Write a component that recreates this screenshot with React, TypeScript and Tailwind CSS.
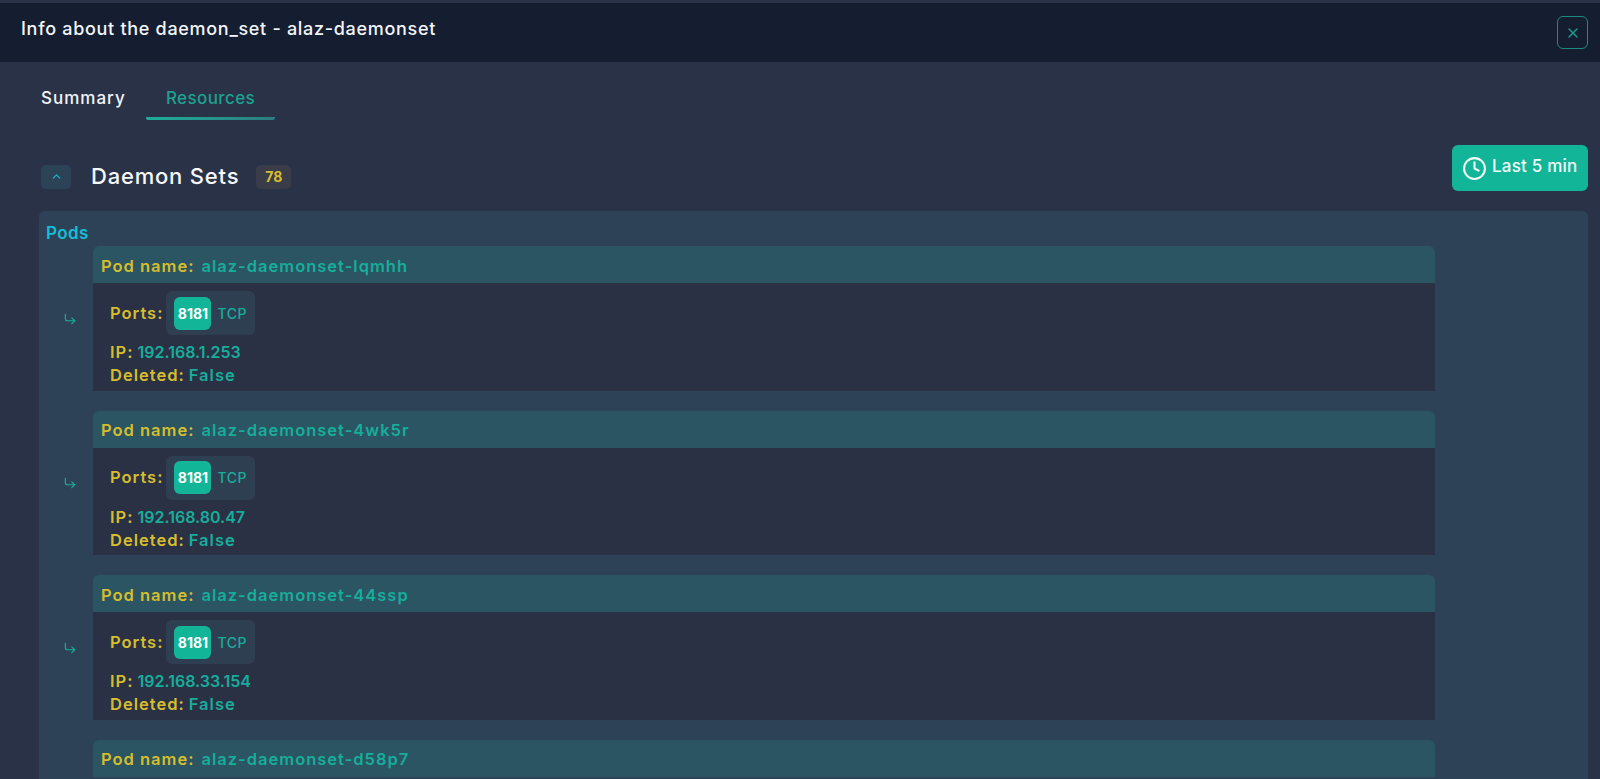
import { Clock, ChevronUp, X, CornerDownRight } from "lucide-react";

const pods = [
  { name: "alaz-daemonset-lqmhh", ip: "192.168.1.253" },
  { name: "alaz-daemonset-4wk5r", ip: "192.168.80.47" },
  { name: "alaz-daemonset-44ssp", ip: "192.168.33.154" },
  { name: "alaz-daemonset-d58p7", ip: "" },
];

function Pod({ name, ip }: { name: string; ip: string }) {
  return (
    <div className="flex items-stretch">
      <div className="w-[54px] shrink-0 flex items-center pl-[24px] pt-[1px] text-[#17ad9b]">
        {ip && <CornerDownRight size={14} strokeWidth={2} />}
      </div>
      <div className="w-[1342px] shrink-0">
        <div className="h-[37px] rounded-t-[6px] bg-[#2b5562] flex items-center pl-[8px] pt-[3px] text-[16.5px] font-semibold tracking-[1px]">
          <span className="text-[#d6bd2e]">Pod name:</span>
          <span className="ml-[7px] text-[#17ad9b]">{name}</span>
        </div>
        {ip && (
          <div className="h-[107.5px] bg-[#2a3145] pl-[17px] pt-[8px] text-[16.5px] font-semibold tracking-[1px]">
            <div className="flex items-center h-[44px]">
              <span className="text-[#d6bd2e]">Ports:</span>
              <div className="ml-[3px] h-[44px] w-[89px] rounded-[6px] bg-[#2f3f52] flex items-center pl-[8px] tracking-normal">
                <span className="w-[37px] h-[33px] rounded-[6px] bg-[#12b598] text-white text-[14px] font-bold flex items-center justify-center">8181</span>
                <span className="ml-[6px] text-[#17ad9b] text-[14px] font-medium tracking-[0.5px]">TCP</span>
              </div>
            </div>
            <div className="mt-[6px] leading-[23px] flex">
              <span className="text-[#d6bd2e]">IP:</span>
              <span className="ml-[4px] text-[#17ad9b] text-[16px] tracking-normal">{ip}</span>
            </div>
            <div className="leading-[22px] flex">
              <span className="text-[#d6bd2e]">Deleted:</span>
              <span className="ml-[4px] text-[#17ad9b]">False</span>
            </div>
          </div>
        )}
      </div>
    </div>
  );
}

export default function App() {
  return (
    <div className="h-[779px] w-[1600px] overflow-hidden bg-[#2a3248] text-white font-['Inter',sans-serif]">
      <div className="h-[3px] bg-[#2a3248]" />
      <header className="h-[59px] bg-[#151e31] flex items-start justify-between pl-[21px] pr-[12px]">
        <h1 className="mt-[14px] text-[18px] leading-[24px] font-medium tracking-[0.7px] text-[#f3f5f8]">Info about the daemon_set - alaz-daemonset</h1>
        <button className="mt-[13px] w-[31px] h-[33px] rounded-[6px] border border-[#1c8a80] flex items-center justify-center text-[#1c9c8e]">
          <X size={16} />
        </button>
      </header>
      <nav className="pl-[21px] mt-[21px] flex h-[37px] text-[17px] font-medium">
        <div className="w-[125px] pl-[20px] leading-[30px] tracking-[1px] text-[#f3f5f8]">Summary</div>
        <div className="w-[129px] flex flex-col items-center">
          <span className="leading-[30px] tracking-[0.4px] text-[#1ca18f]">Resources</span>
          <span className="mt-auto block w-full h-[3px] rounded-b-[2px] bg-gradient-to-r from-[#1cae9a] to-[#2a7d80]" />
        </div>
      </nav>
      <div className="mt-[25px] pl-[41px] pr-[12px] flex items-start justify-between h-[66px]">
        <div className="flex items-center mt-[15px]">
          <span className="w-[30px] h-[24px] rounded-[5px] bg-[#2c4257] flex items-center justify-center text-[#16b3c4]">
            <ChevronUp size={13} strokeWidth={2.5} />
          </span>
          <span className="ml-[20px] text-[22px] font-medium tracking-[0.8px] text-[#f7f8fa]">Daemon Sets</span>
          <span className="ml-[17px] w-[35px] h-[24px] rounded-[5px] bg-[#3a3d49] flex items-center justify-center text-[14px] font-bold text-[#d6bd2e]">78</span>
        </div>
        <button className="w-[136px] h-[46px] rounded-[6px] bg-[#12b598] flex items-center pl-[10px] pb-[2px] text-[17px] font-medium tracking-[0.2px] text-[#f3fbf9] whitespace-nowrap">
          <Clock size={25} strokeWidth={2} className="shrink-0 mt-[2px]" />
          <span className="ml-[5px]">Last 5 min</span>
        </button>
      </div>
      <section className="ml-[39px] w-[1549px] h-[600px] rounded-t-[6px] bg-[#2e4257] pt-[11px]">
        <div className="pl-[7px] pb-[1px] text-[17px] leading-[23px] font-semibold tracking-[0.4px] text-[#12bfd8]">Pods</div>
        <div className="flex flex-col gap-[20px]">
          {pods.map((p) => (
            <Pod key={p.name} name={p.name} ip={p.ip} />
          ))}
        </div>
      </section>
    </div>
  );
}
